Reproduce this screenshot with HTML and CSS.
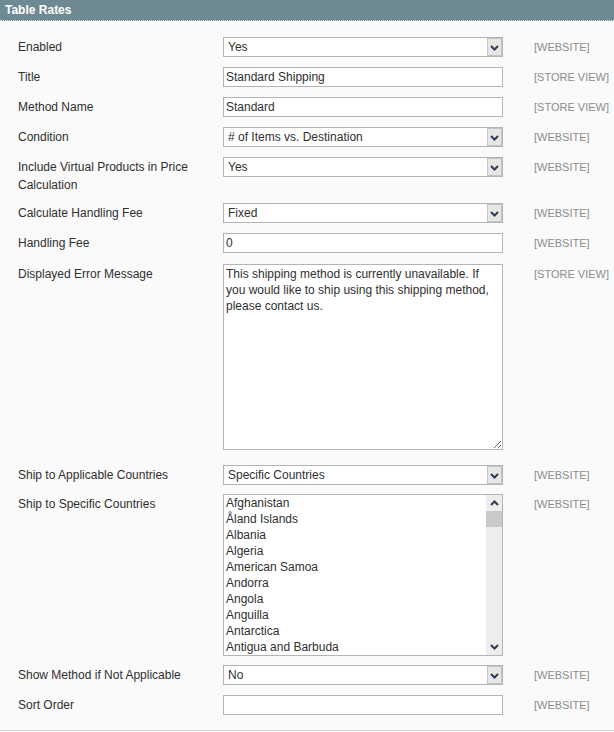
FILE: index.html
```html
<!DOCTYPE html>
<html lang="en">
<head>
<meta charset="utf-8">
<title>Table Rates</title>
<link rel="stylesheet" href="styles.css">
</head>
<body>
<div class="section">
  <div class="section-head">Table Rates</div>
  <div class="form">
    <div class="row">
      <div class="label">Enabled</div>
      <div class="control select"><select><option>Yes</option></select><span class="arrow"><svg width="9" height="6" viewBox="0 0 9 6"><path d="M1 1l3.5 3.5L8 1" stroke="#2e3b57" stroke-width="2" fill="none"/></svg></span></div>
      <div class="scope">[WEBSITE]</div>
    </div>
    <div class="row">
      <div class="label">Title</div>
      <div class="control"><input class="text" type="text" value="Standard Shipping"></div>
      <div class="scope">[STORE VIEW]</div>
    </div>
    <div class="row">
      <div class="label">Method Name</div>
      <div class="control"><input class="text" type="text" value="Standard"></div>
      <div class="scope">[STORE VIEW]</div>
    </div>
    <div class="row">
      <div class="label">Condition</div>
      <div class="control select"><select><option># of Items vs. Destination</option></select><span class="arrow"><svg width="9" height="6" viewBox="0 0 9 6"><path d="M1 1l3.5 3.5L8 1" stroke="#2e3b57" stroke-width="2" fill="none"/></svg></span></div>
      <div class="scope">[WEBSITE]</div>
    </div>
    <div class="row">
      <div class="label">Include Virtual Products in Price Calculation</div>
      <div class="control select"><select><option>Yes</option></select><span class="arrow"><svg width="9" height="6" viewBox="0 0 9 6"><path d="M1 1l3.5 3.5L8 1" stroke="#2e3b57" stroke-width="2" fill="none"/></svg></span></div>
      <div class="scope">[WEBSITE]</div>
    </div>
    <div class="row">
      <div class="label">Calculate Handling Fee</div>
      <div class="control select"><select><option>Fixed</option></select><span class="arrow"><svg width="9" height="6" viewBox="0 0 9 6"><path d="M1 1l3.5 3.5L8 1" stroke="#2e3b57" stroke-width="2" fill="none"/></svg></span></div>
      <div class="scope">[WEBSITE]</div>
    </div>
    <div class="row">
      <div class="label">Handling Fee</div>
      <div class="control"><input class="text" type="text" value="0"></div>
      <div class="scope">[WEBSITE]</div>
    </div>
    <div class="row row-textarea">
      <div class="label">Displayed Error Message</div>
      <div class="control"><textarea class="area">This shipping method is currently unavailable. If
you would like to ship using this shipping method,
please contact us.</textarea></div>
      <div class="scope">[STORE VIEW]</div>
    </div>
    <div class="row">
      <div class="label">Ship to Applicable Countries</div>
      <div class="control select"><select><option>Specific Countries</option></select><span class="arrow"><svg width="9" height="6" viewBox="0 0 9 6"><path d="M1 1l3.5 3.5L8 1" stroke="#2e3b57" stroke-width="2" fill="none"/></svg></span></div>
      <div class="scope">[WEBSITE]</div>
    </div>
    <div class="row row-multi">
      <div class="label">Ship to Specific Countries</div>
      <div class="control multi">
        <div class="options">
          <div>Afghanistan</div>
          <div>Åland Islands</div>
          <div>Albania</div>
          <div>Algeria</div>
          <div>American Samoa</div>
          <div>Andorra</div>
          <div>Angola</div>
          <div>Anguilla</div>
          <div>Antarctica</div>
          <div>Antigua and Barbuda</div>
        </div>
        <div class="scrollbar">
          <span class="sb-btn"><svg width="9" height="6" viewBox="0 0 9 6"><path d="M1 5l3.5-3.5L8 5" stroke="#2e3b57" stroke-width="2" fill="none"/></svg></span>
          <span class="sb-thumb"></span>
          <span class="sb-track"></span>
          <span class="sb-btn"><svg width="9" height="6" viewBox="0 0 9 6"><path d="M1 1l3.5 3.5L8 1" stroke="#2e3b57" stroke-width="2" fill="none"/></svg></span>
        </div>
      </div>
      <div class="scope">[WEBSITE]</div>
    </div>
    <div class="row">
      <div class="label">Show Method if Not Applicable</div>
      <div class="control select"><select><option>No</option></select><span class="arrow"><svg width="9" height="6" viewBox="0 0 9 6"><path d="M1 1l3.5 3.5L8 1" stroke="#2e3b57" stroke-width="2" fill="none"/></svg></span></div>
      <div class="scope">[WEBSITE]</div>
    </div>
    <div class="row">
      <div class="label">Sort Order</div>
      <div class="control"><input class="text" type="text" value=""></div>
      <div class="scope">[WEBSITE]</div>
    </div>
  </div>
</div>
</body>
</html>
```
FILE: styles.css
```css
html, body {
  margin: 0;
  padding: 0;
  background: #fafafa;
}

body {
  font-family: "Liberation Sans", Arial, sans-serif;
  font-size: 12px;
  line-height: 18px;
  color: #2f2f2f;
}

.section {
  width: 614px;
  border-bottom: 1px solid #d2d2d2;
}

.section-head {
  height: 20px;
  line-height: 20px;
  padding-left: 5px;
  background: #6f8992;
  color: #ffffff;
  font-weight: bold;
  border-bottom: 1px dotted #e2e6e8;
}

.form {
  display: flex;
  flex-direction: column;
  gap: 10px;
  padding: 16px 0 15px 18px;
}

.row {
  display: flex;
  align-items: flex-start;
}

.row-textarea {
  margin-top: 1px;
}

.row-textarea .control {
  padding-bottom: 5px;
}

.row-multi {
  margin-top: -1px;
  margin-bottom: -1px;
}

.label {
  width: 205px;
  flex: none;
  line-height: 18px;
  padding-top: 1px;
  margin-bottom: -1px;
}

.control {
  width: 280px;
  flex: none;
}

.scope {
  margin-left: 31px;
  padding-top: 1px;
  margin-bottom: -1px;
  font-size: 11px;
  line-height: 18px;
  color: #8c8c8c;
}

.text {
  display: block;
  box-sizing: border-box;
  width: 280px;
  height: 20px;
  margin: 0;
  padding: 0 2px;
  border: 1px solid #b4b4b4;
  background: #ffffff;
  font: inherit;
  color: #2f2f2f;
  outline: none;
}

.select {
  position: relative;
  height: 20px;
}

.select select {
  display: block;
  box-sizing: border-box;
  width: 280px;
  height: 20px;
  margin: 0;
  padding: 0 20px 0 4px;
  border: 1px solid #b4b4b4;
  border-radius: 0;
  background: #ffffff;
  font: inherit;
  color: #2f2f2f;
  -webkit-appearance: none;
  appearance: none;
  outline: none;
}

.arrow {
  position: absolute;
  top: 1px;
  right: 1px;
  bottom: 1px;
  width: 15px;
  box-sizing: border-box;
  border: 1px solid #c4c4c4;
  background: #e6e6e6;
  display: flex;
  align-items: center;
  justify-content: center;
  padding-top: 1px;
}

.area {
  display: block;
  box-sizing: border-box;
  width: 280px;
  height: 186px;
  margin: 0;
  padding: 1px 2px;
  border: 1px solid #b4b4b4;
  background: #ffffff;
  font: inherit;
  line-height: 16px;
  color: #2f2f2f;
  resize: both;
  outline: none;
}

.multi {
  display: flex;
  box-sizing: border-box;
  height: 162px;
  border: 1px solid #b4b4b4;
  background: #ffffff;
}

.options {
  flex: 1;
  padding-left: 2px;
  line-height: 16px;
  overflow: hidden;
}

.scrollbar {
  width: 16px;
  flex: none;
  display: flex;
  flex-direction: column;
  background: #ededed;
}

.sb-btn {
  height: 16px;
  display: flex;
  align-items: center;
  justify-content: center;
}

.sb-thumb {
  height: 16px;
  background: #c9c9c9;
}

.sb-track {
  flex: 1;
}
```
